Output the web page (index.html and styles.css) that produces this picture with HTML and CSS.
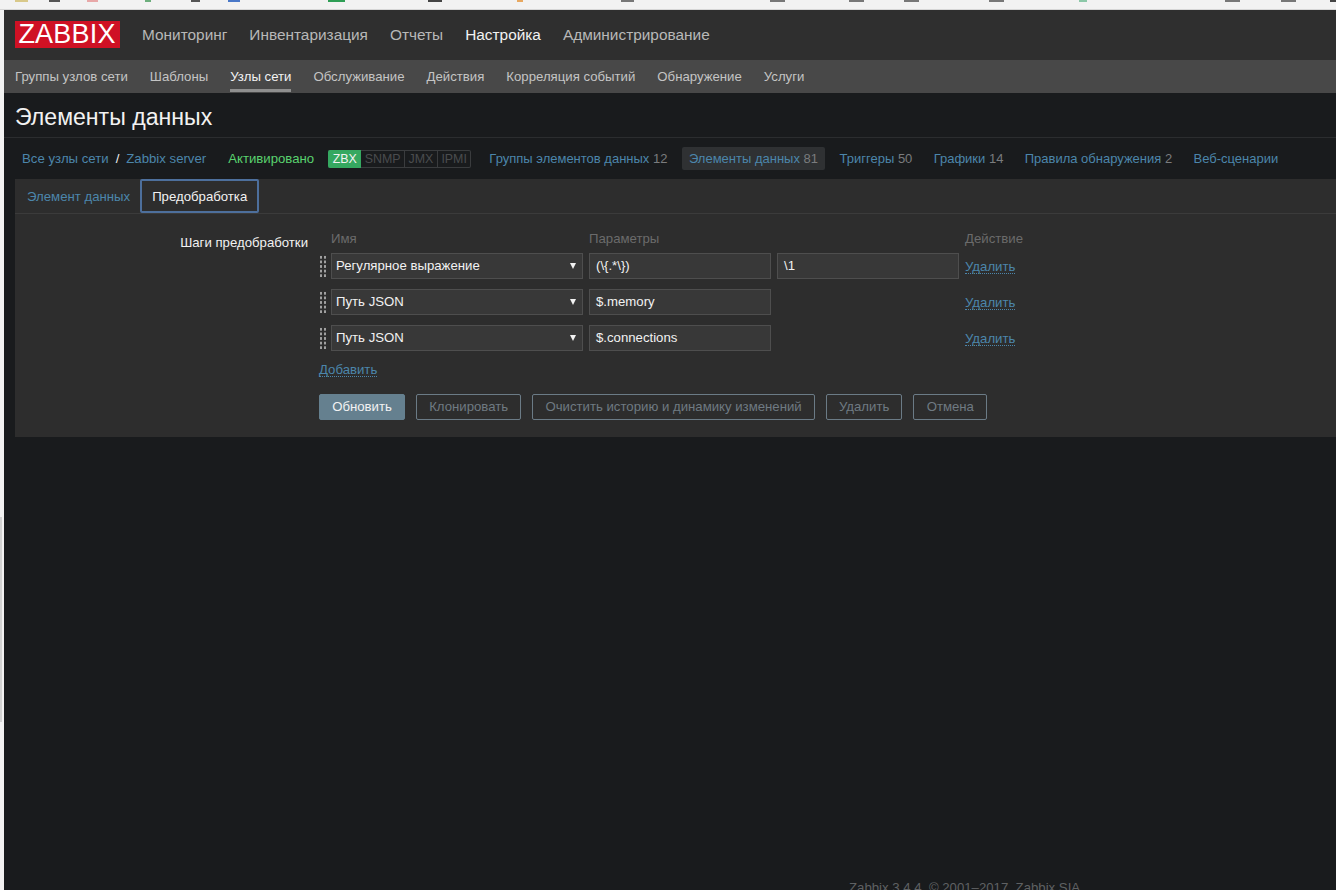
FILE: index.html
```html
<!DOCTYPE html>
<html lang="ru">
<head>
<meta charset="utf-8">
<title>Элементы данных</title>
<link rel="stylesheet" href="styles.css">
</head>
<body>
<div class="browser-strip"></div>
<div class="app">
  <header class="top-nav">
    <div class="logo">ZABBIX</div>
    <nav class="main-menu">
      <a>Мониторинг</a><a>Инвентаризация</a><a>Отчеты</a><a class="on">Настройка</a><a>Администрирование</a>
    </nav>
  </header>
  <nav class="sub-nav">
    <a>Группы узлов сети</a><a>Шаблоны</a><a class="on">Узлы сети</a><a>Обслуживание</a><a>Действия</a><a>Корреляция событий</a><a>Обнаружение</a><a>Услуги</a>
  </nav>
  <h1 class="title">Элементы данных</h1>
  <div class="crumbs">
    <a class="c-all">Все узлы сети</a><span class="slash">/</span><a>Zabbix server</a>
    <span class="status">Активировано</span>
    <span class="badges"><b class="zbx">ZBX</b><b>SNMP</b><b>JMX</b><b>IPMI</b></span>
    <a class="c-link">Группы элементов данных <i>12</i></a>
    <a class="c-link current">Элементы данных <i>81</i></a>
    <a class="c-link">Триггеры <i>50</i></a>
    <a class="c-link">Графики <i>14</i></a>
    <a class="c-link">Правила обнаружения <i>2</i></a>
    <a class="c-link">Веб-сценарии</a>
  </div>
  <section class="panel">
    <div class="tabs"><a class="tab">Элемент данных</a><a class="tab active">Предобработка</a></div>
    <div class="form">
      <div class="f-label">Шаги предобработки</div>
      <div class="f-body">
        <div class="steps">
          <span class="head h1">Имя</span><span class="head h2">Параметры</span><span class="head h3">Действие</span>

          <span class="grip"></span>
          <div class="select">Регулярное выражение<span class="arrow"></span></div>
          <div class="input">(\{.*\})</div>
          <div class="input">\1</div>
          <a class="dotted">Удалить</a>

          <span class="grip"></span>
          <div class="select">Путь JSON<span class="arrow"></span></div>
          <div class="input">$.memory</div>
          <span></span>
          <a class="dotted">Удалить</a>

          <span class="grip"></span>
          <div class="select">Путь JSON<span class="arrow"></span></div>
          <div class="input">$.connections</div>
          <span></span>
          <a class="dotted">Удалить</a>
        </div>
        <a class="dotted add">Добавить</a>
        <div class="buttons">
          <button class="btn primary">Обновить</button>
          <button class="btn">Клонировать</button>
          <button class="btn">Очистить историю и динамику изменений</button>
          <button class="btn">Удалить</button>
          <button class="btn">Отмена</button>
        </div>
      </div>
    </div>
  </section>
  <footer class="foot">Zabbix 3.4.4. © 2001–2017, Zabbix SIA</footer>
</div>
</body>
</html>
```
FILE: styles.css
```css
* { box-sizing: border-box; }
html, body { margin: 0; height: 890px; overflow: hidden; }
body {
  background: #f2f2f2 linear-gradient(#d2d2d2, #d2d2d2) 0 517px / 2px 205px no-repeat;
  font-family: "Liberation Sans", Arial, sans-serif;
  font-size: 13.2px;
  color: #f2f2f2;
}
a { color: #4796c4; }
.browser-strip {
  height: 10px;
  border-bottom: 1px solid #d6d6d6;
  background: linear-gradient(90deg,
    transparent 15px, #d9c98a 15px, #d9c98a 28px, transparent 28px,
    transparent 49px, #555 49px, #555 60px, transparent 60px,
    transparent 87px, #e8a8a8 87px, #e8a8a8 98px, transparent 98px,
    transparent 145px, #6cae7c 145px, #6cae7c 151px, transparent 151px,
    transparent 191px, #555 191px, #555 200px, transparent 200px,
    transparent 228px, #4a78c8 228px, #4a78c8 240px, transparent 240px,
    transparent 328px, #2f9e55 328px, #2f9e55 345px, transparent 345px,
    transparent 428px, #444 428px, #444 442px, transparent 442px,
    transparent 517px, #e8a860 517px, #e8a860 523px, transparent 523px,
    transparent 621px, #777 621px, #777 634px, transparent 634px,
    transparent 770px, #777 770px, #777 785px, transparent 785px,
    transparent 849px, #777 849px, #777 864px, transparent 864px,
    transparent 904px, #777 904px, #777 919px, transparent 919px,
    transparent 989px, #777 989px, #777 1004px, transparent 1004px,
    transparent 1079px, #8cc8a8 1079px, #8cc8a8 1087px, transparent 1087px,
    transparent 1225px, #777 1225px, #777 1240px, transparent 1240px,
    transparent 1281px, #777 1281px, #777 1296px, transparent 1296px,
    transparent 1330px, #444 1330px) 0 0 / 100% 2px no-repeat;
}
.app { margin-left: 4px; height: 880px; background: #191b1d; display: flex; flex-direction: column; position: relative; overflow: hidden; }
.top-nav { height: 50px; background: #2f2f2f; display: flex; align-items: center; padding-left: 11px; }
.logo { width: 105px; height: 27px; margin-top: -1px; padding-right: 1px; background: #cf1124; color: #fff; font-size: 27px; line-height: 27px; text-align: center; letter-spacing: .2px; }
.main-menu { display: flex; margin-left: 22px; gap: 22px; font-size: 15.4px; margin-top: -1px; }
.main-menu a { color: #b8b8b8; }
.main-menu a.on { color: #f2f2f2; }
.sub-nav { height: 33px; background: #484848; display: flex; gap: 22px; padding-left: 11px; line-height: 33px; }
.sub-nav a { color: #c4c4c4; height: 32px; }
.sub-nav a.on { color: #f2f2f2; border-bottom: 3px solid #8f8f8f; }
.title { margin: 0; height: 45px; padding: 11px 0 0 11px; font-size: 23.1px; line-height: 26px; font-weight: 400; color: #f2f2f2; border-bottom: 1px solid #2b2d2f; }
.crumbs { height: 41px; display: flex; align-items: center; padding-left: 18px; }
.crumbs a { color: #4c86ab; }
.slash { margin: 0 7px; color: #f2f2f2; }
.status { margin-left: 22px; color: #59d26f; }
.badges { display: flex; margin-left: 14px; height: 18px; font-size: 12.4px; line-height: 16px; border: 1px solid #3a3c3e; border-left: 0; border-radius: 2px; }
.badges b { font-weight: 400; color: #4a4c4e; padding: 0 3.5px; border-right: 1px solid #3a3c3e; }
.badges b:last-child { border-right: 0; }
.badges b.zbx { background: #35a860; color: #f2f2f2; margin: -1px 0; height: 18px; line-height: 18px; padding: 0 4.5px; border: 0; border-radius: 2px 0 0 2px; }
.crumbs .c-link { margin-left: 21.3px; font-size: 13px; }
.crumbs .badges + .c-link { margin-left: 18px; }
.crumbs .c-link i { font-style: normal; color: #7a7c7e; }
.crumbs .current { margin: 0 14.5px; padding: 0 7px; height: 23px; line-height: 23px; background: #2f3133; border-radius: 2px; }
.crumbs .current + .c-link { margin-left: 0; }
.panel { margin-left: 11px; height: 258px; background: #2d2d2d; }
.tabs { height: 35px; display: flex; border-bottom: 1px solid #3b3b3b; }
.tab { color: #4c86ab; padding: 0 10px 0 12px; line-height: 35px; }
.tab.active { color: #f2f2f2; height: 34px; line-height: 32px; border: 2px solid #4d6f9c; border-radius: 2px; padding: 0 10px; }
.form { display: flex; }
.f-label { width: 293px; padding-top: 21px; text-align: right; color: #f2f2f2; line-height: 15px; }
.f-body { margin-left: 11px; padding-top: 17px; width: 720px; }
.steps { display: grid; grid-template-columns: 6px 252px 182px 182px auto; column-gap: 6px; row-gap: 10px; align-items: center; }
.steps > .head { color: #6b6b6b; height: 15px; line-height: 15px; margin-bottom: -3px; }
.h1 { grid-column: 2; }
.h2 { grid-column: 3 / 5; }
.h3 { grid-column: 5; }
.grip { width: 8px; height: 23px; justify-self: start; background-image: radial-gradient(circle at center, #a0a0a0 1.2px, transparent 1.5px); background-size: 4px 4.6px; }
.select, .input { height: 26px; background: #383838; border: 1px solid #4e4e4e; color: #f2f2f2; line-height: 24px; position: relative; }
.select { padding-left: 4px; }
.input { padding-left: 6px; }
.arrow { position: absolute; right: 6px; top: 9px; width: 0; height: 0; border-left: 3px solid transparent; border-right: 3px solid transparent; border-top: 6px solid #f2f2f2; }
.dotted { color: #4c86ab; border-bottom: 1px dotted #4c86ab; line-height: 13px; justify-self: start; margin-top: 1px; }
.add { display: inline-block; margin-top: 12px; }
.buttons { display: flex; gap: 11px; margin-top: 17px; }
.btn { height: 26px; padding: 0 12.15px 2px; background: transparent; border: 1px solid #6b7b86; border-radius: 2px; color: #6f7a82; font: 13.2px "Liberation Sans", Arial, sans-serif; }
.btn.primary { background: #65808f; border-color: #65808f; color: #f2f2f2; }
.foot { position: absolute; left: 845px; top: 870px; color: #5f6163; line-height: 15px; white-space: nowrap; }
```
